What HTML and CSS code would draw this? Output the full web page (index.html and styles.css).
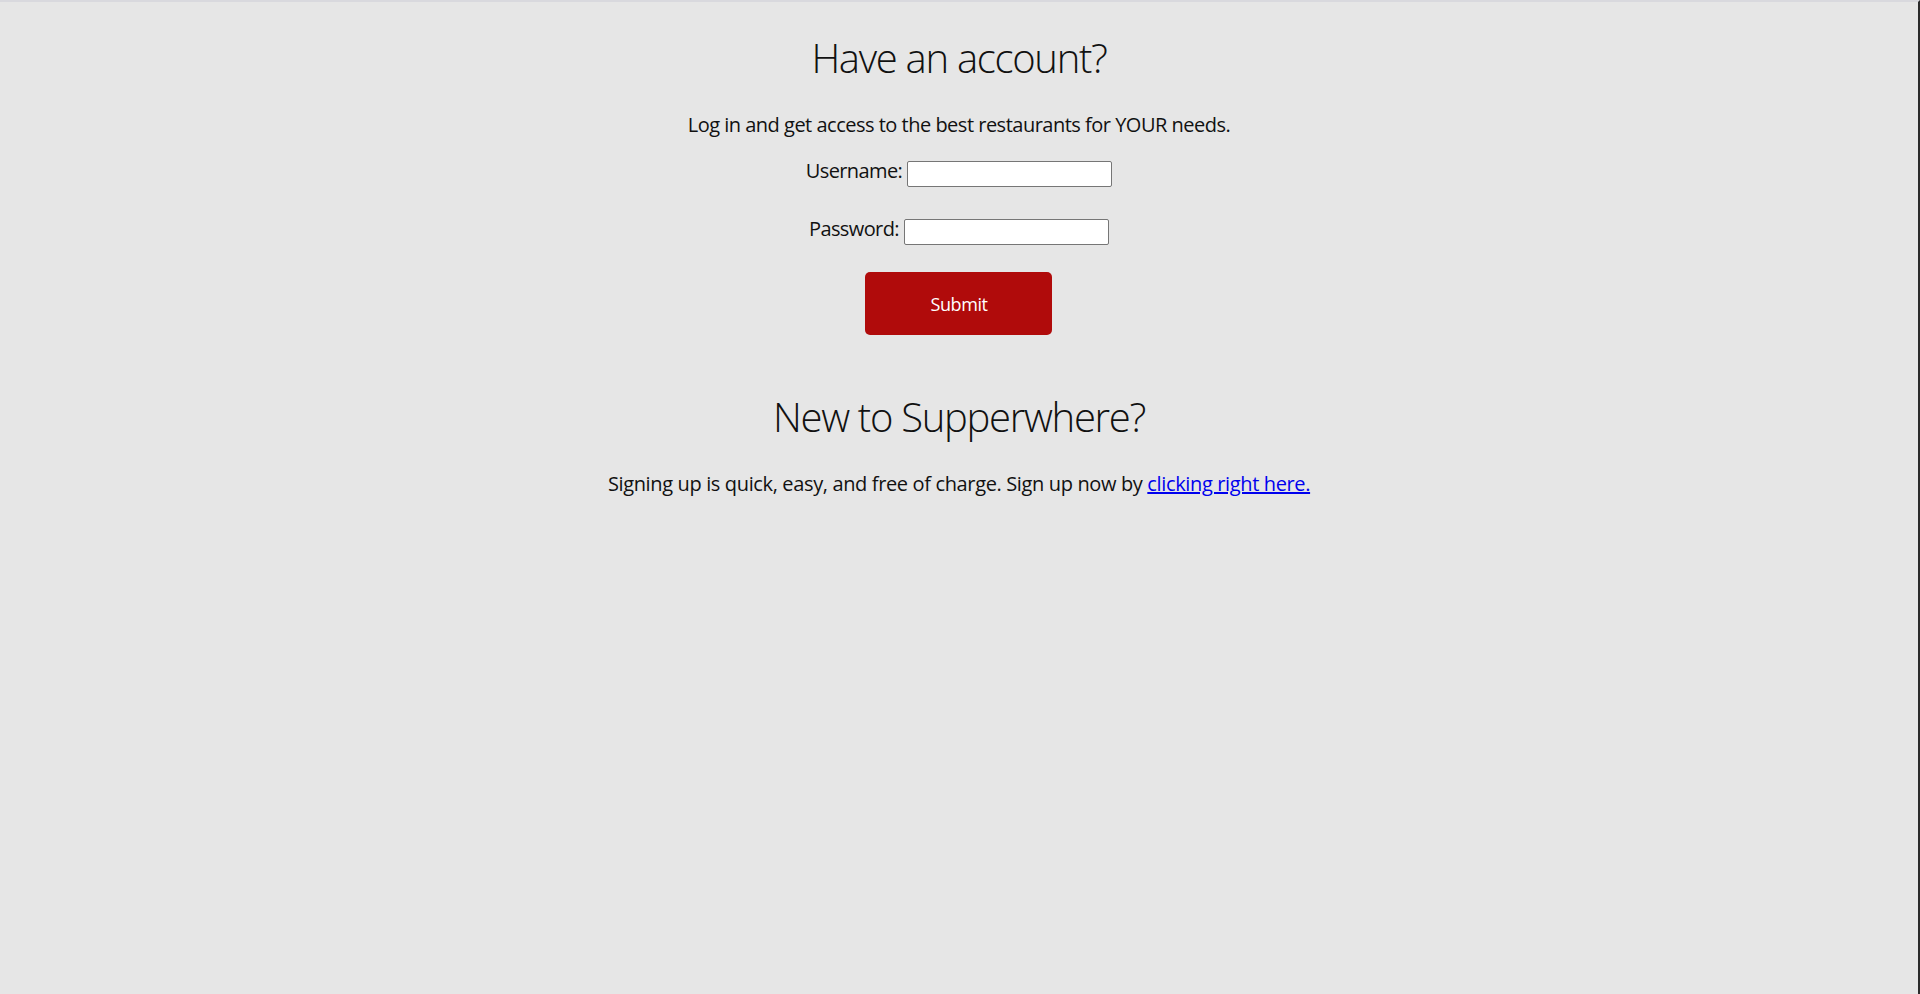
FILE: index.html
```html
<!DOCTYPE html>
<html lang="en">
<head>
<meta charset="utf-8">
<title>Supperwhere - Log in</title>
<link rel="stylesheet" href="styles.css">
</head>
<body>
<main class="page">
  <section class="login">
    <h1 class="title">Have an account?</h1>
    <p class="lead">Log in and get access to the best restaurants for YOUR needs.</p>
    <form class="form" onsubmit="return false;">
      <div class="field field-first">
        <label class="label" for="username">Username:</label>
        <input class="input" id="username" type="text">
      </div>
      <div class="field field-second">
        <label class="label" for="password">Password:</label>
        <input class="input" id="password" type="password">
      </div>
      <button class="submit" type="submit">Submit</button>
    </form>
  </section>
  <section class="signup">
    <h2 class="title title-second">New to Supperwhere?</h2>
    <p class="lead lead-second">Signing up is quick, easy, and free of charge. Sign up now by <a class="link" href="#">clicking right here.</a></p>
  </section>
</main>
</body>
</html>
```
FILE: styles.css
```css
* {
  box-sizing: border-box;
}

html, body {
  margin: 0;
  padding: 0;
}

body {
  min-height: 994px;
  background: #e6e6e6;
  border-top: 2px solid #d9d9de;
  border-right: 2px solid #2b2b2b;
  font-family: "Open Sans", "Noto Sans", "Liberation Sans", sans-serif;
  color: #111111;
}

.page {
  display: flex;
  flex-direction: column;
  align-items: center;
  text-align: center;
}

.login, .signup {
  display: flex;
  flex-direction: column;
  align-items: center;
}

.title {
  margin: 29px 0 0;
  font-size: 40px;
  line-height: 54px;
  font-weight: 300;
  letter-spacing: -1.3px;
}

.title-second {
  margin-top: 55px;
}

.lead {
  margin: 26px 0 0;
  font-size: 20px;
  line-height: 27px;
  font-weight: 400;
  letter-spacing: -0.5px;
}

.lead-second {
  margin-top: 26px;
  letter-spacing: -0.36px;
}

.form {
  display: flex;
  flex-direction: column;
  align-items: center;
}

.field {
  display: flex;
  align-items: flex-start;
  gap: 5px;
  height: 26px;
}

.field-first {
  margin-top: 23px;
}

.field-second {
  margin-top: 32px;
}

.label {
  margin-top: -3px;
  font-size: 20px;
  line-height: 26px;
  letter-spacing: -0.6px;
}

.input {
  width: 205px;
  height: 26px;
  margin: 0;
  padding: 1px 3px;
  background: #ffffff;
  border: 1px solid #767676;
  border-radius: 2px;
  font-family: inherit;
  font-size: 16px;
}

.submit {
  display: flex;
  align-items: center;
  justify-content: center;
  width: 187px;
  height: 63px;
  margin-top: 27px;
  padding: 0;
  background: #b00b0b;
  color: #ffffff;
  border: none;
  border-radius: 5px;
  font-family: inherit;
  font-size: 18px;
  letter-spacing: -0.4px;
  cursor: pointer;
}

.link {
  color: #0000ee;
  text-decoration: underline;
}
```
